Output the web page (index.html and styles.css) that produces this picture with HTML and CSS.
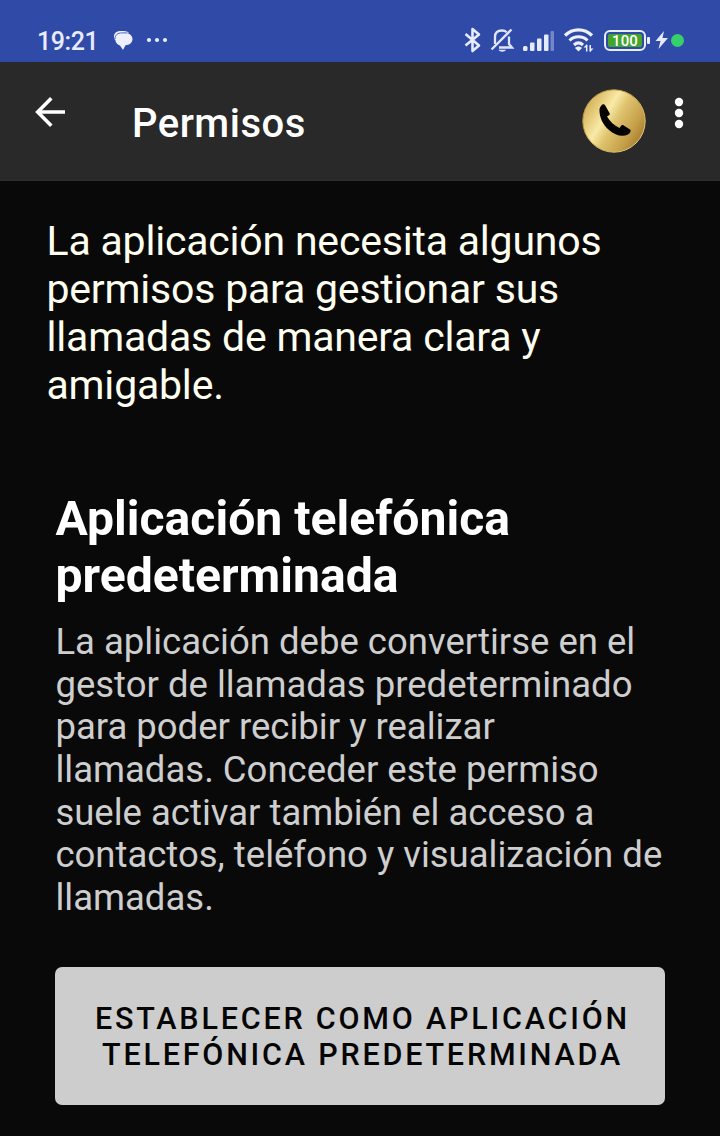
FILE: index.html
```html
<!DOCTYPE html>
<html lang="es">
<head>
<meta charset="utf-8">
<title>Permisos</title>
<link rel="stylesheet" href="styles.css">
</head>
<body>
<div class="status">
  <span class="clock">19:21</span>
  <svg class="chat" width="21" height="21" viewBox="0 0 21 21"><path d="M2 10C-1 4 3 1 8 1c4 0 6 0 8 2" fill="#edf0ff"/><path d="M2.300 10C1.600 6 4.500 3.300 8.500 3.300h4c5 0 7 3 7 6s-3 6-7 6L10 20 7 15.500C4.500 14.500 2.700 13 2.300 10Z" fill="#edf0ff"/><path d="M2 9C2 4.800 5 2.900 8.500 2.900h6" fill="none" stroke="#4259ae" stroke-width=".9"/></svg>
  <svg class="dots" width="22" height="6" viewBox="0 0 22 6" fill="#e8ecff"><circle cx="3" cy="3" r="2.100"/><circle cx="11" cy="3" r="2.100"/><circle cx="19" cy="3" r="2.100"/></svg>
  <div class="indicators">
    <svg width="18" height="28" viewBox="0 0 18 28" fill="none" stroke="#e5eaff" stroke-width="2.600" stroke-linejoin="round"><path d="M1.500 8 15 19.500 8.500 25V3L15 8.500 1.500 19.500"/></svg>
    <svg class="bell" width="25" height="28" viewBox="0 0 25 28" fill="none" stroke="#dfe5ff" stroke-width="2.300"><path d="M5 18V11C5 6.500 8 4.500 12 4.500c2 0 3.500.6 4.700 1.800M19 10.500V18l3 3.500H9"/><path d="M1.500 23.500 21.500 3.500"/><path d="M8.500 23.800h7.500c-1 2.600-6.500 2.600-7.500 0Z" fill="#dfe5ff" stroke="none"/></svg>
    <svg class="signal" width="33" height="22" viewBox="0 0 33 22" fill="#e5eaff"><rect x="1" y="16" width="4.500" height="5" rx="1.500"/><rect x="8" y="12.500" width="4.500" height="8.500" rx="1"/><rect x="15" y="8.500" width="4.500" height="12.500" rx="1"/><rect x="22" y="4.500" width="4.500" height="16.500" rx="1"/><rect x="28.500" y="1" width="3.500" height="20" rx="1" opacity=".38"/></svg>
    <svg class="wifi" width="32" height="26" viewBox="0 0 32 26" fill="none" stroke="#edf0ff"><path d="M2 8.500C9.500 1 21.500 1 29 8.500" stroke-width="3.300"/><path d="M6.500 13.500c5-5 13-5 18 0" stroke-width="3.100"/><path d="M11 18c2.800-2.500 6.200-2.500 9 0" stroke-width="3.100"/><path d="m15.500 24.500-3.500-3.500c2-2 5-2 7 0Z" fill="#edf0ff" stroke="none"/><path d="M23.700 24.500V18M27.200 18v6.500" stroke-width="1.500"/><path d="m20.500 20.500 3.500-3.500v3.500ZM27 25l3.500-3.500H27Z" fill="#edf0ff" stroke="none"/></svg>
    <div class="battery"><span>100</span></div>
    <svg class="bolt" width="14" height="20" viewBox="0 0 14 20"><path d="M9 1 .5 11h5L3.500 19l9.500-11H7.500Z" fill="#e5eaff"/></svg>
    <i class="privacy"></i>
  </div>
</div>
<header class="bar">
  <svg class="back" width="32" height="32" viewBox="0 0 32 32" fill="none" stroke="#fff" stroke-width="3.600"><path d="M30 16H3M16.300 2.300 2.700 16l13.600 13.700"/></svg>
  <h1 class="title">Permisos</h1>
  <svg class="phone" width="64" height="64" viewBox="0 0 64 64">
    <defs>
      <linearGradient id="gold" x1="0" y1=".2" x2="1" y2=".8"><stop offset="0" stop-color="#cba852"/><stop offset=".18" stop-color="#e3c876"/><stop offset=".36" stop-color="#f8eaa7"/><stop offset=".52" stop-color="#dfc36e"/><stop offset=".78" stop-color="#c59f49"/><stop offset="1" stop-color="#a27428"/></linearGradient>
      <linearGradient id="rim" x1="0" y1="0" x2="1" y2="1"><stop offset="0" stop-color="#b38c3c"/><stop offset=".5" stop-color="#c9a44e"/><stop offset="1" stop-color="#eddc94"/></linearGradient>
    </defs>
    <circle cx="32" cy="32" r="31.200" fill="url(#gold)" stroke="url(#rim)" stroke-width="1"/>
    <path d="M19 17c1.500-2.500 3.500-2 4.500 0l4 7c1 2-1 2.500-2.500 3.500 3 5 7 9 12.500 11.500 1.500-1 1-3 3.500-3l7 4.500c1.500 1.500 0 4-2 5-6 3-13 .5-19-4.500C21 36 17 28 17.500 20q.5-2 1.500-3Z" fill="#050301"/>
  </svg>
  <svg class="more" width="10" height="32" viewBox="0 0 10 32" fill="#fff"><circle cx="5" cy="5" r="4.200"/><circle cx="5" cy="16" r="4.200"/><circle cx="5" cy="27" r="4.200"/></svg>
</header>
<main class="content">
  <p class="intro">La aplicación necesita algunos<br>permisos para gestionar sus<br>llamadas de manera clara y<br>amigable.</p>
  <section class="permission">
    <h2 class="heading">Aplicación telefónica<br>predeterminada</h2>
    <p class="description">La aplicación debe convertirse en el<br>gestor de llamadas predeterminado<br>para poder recibir y realizar<br>llamadas. Conceder este permiso<br>suele activar también el acceso a<br>contactos, teléfono y visualización de<br>llamadas.</p>
    <button class="action" type="button">ESTABLECER COMO APLICACIÓN<br>TELEFÓNICA PREDETERMINADA</button>
  </section>
</main>
</body>
</html>
```
FILE: styles.css
```css
* { box-sizing: border-box; }
body { margin: 0; height: 1136px; overflow: hidden; background: #090909; color: #fff; font-family: Roboto, sans-serif; white-space: nowrap; }
h1, h2, p { margin: 0; }
svg { display: block; flex: none; }
.status { display: flex; height: 62px; padding: 18px 36px 0 37px; align-items: center; background: #304ba7; }
.clock { width: 62px; padding-top: 3px; font-size: 25px; line-height: 44px; letter-spacing: -.4px; color: #e8ecff; font-weight: 500; }
.chat { margin-left: 14px; }
.dots { margin-left: 12px; }
.indicators { display: flex; align-items: center; height: 44px; margin-left: auto; }
.bell { margin-left: 8px; }
.signal { margin: 2px 0 0 7px; }
.wifi { margin-left: 8px; }
.battery { position: relative; display: flex; align-items: center; justify-content: center; width: 42px; height: 21px; margin-left: 9px; border: 2px solid #e9edff; border-radius: 6px; }
.battery::after { content: ""; position: absolute; right: -6px; top: 5px; width: 3px; height: 7px; background: #e9edff; border-radius: 1px; }
.battery span { width: 34px; height: 13px; border-radius: 2px; background: #43a52c; color: #fff; font-size: 15px; line-height: 14px; letter-spacing: .2px; text-align: center; font-weight: 500; }
.bolt { margin-left: 9px; }
.privacy { width: 13px; height: 13px; margin-left: 2px; border-radius: 50%; background: #35d06c; }
.bar { display: flex; height: 119px; padding: 0 36px 0 35px; align-items: flex-start; background: #292929; border-bottom: 1px solid #303030; }
.back { margin-top: 34px; }
.title { margin: 39px 0 0 65px; font-size: 40px; line-height: 46px; font-weight: 500; letter-spacing: .5px; }
.phone { margin: 27px 0 0 auto; }
.more { margin: 35px 0 0 28px; }
.content { padding: 36px 47px 0 46px; }
.intro { padding-left: .5px; color: #fffff0; font-size: 41px; line-height: 48px; letter-spacing: -.2px; }
.permission { padding: 81px 8px 0 9px; }
.heading { padding-left: .5px; font-size: 48.100px; line-height: 57px; font-weight: 700; }
.description { margin-top: 17px; padding-left: .4px; color: #cecece; font-size: 36.500px; line-height: 42.670px; }
.action { display: block; width: 610px; height: 138px; margin-top: 47px; padding: 2px 0 0 5px; border: 0; border-radius: 7px; background: #cdcdcd; color: #050505; font: 500 30.500px/36px Roboto, sans-serif; letter-spacing: 2.800px; }
```
